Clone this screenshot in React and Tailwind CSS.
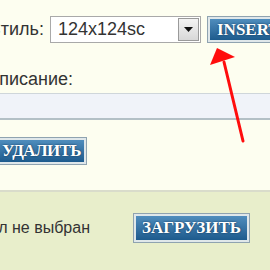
export default function App() {
  const btnOuter = "flex border border-[#8fa3b0] bg-[#dfe7ea] p-[2px] shrink-0";
  const btnInner =
    "flex items-center h-full bg-gradient-to-b from-[#4f8dbd] to-[#1d5b8d] text-white font-bold font-['Liberation_Serif',serif] text-[17px] whitespace-nowrap [text-shadow:0_0_2px_#0b3050]";
  return (
    <div className="relative w-[270px] h-[270px] overflow-hidden bg-[#fdfef0] font-['Liberation_Sans',Arial,sans-serif] text-[#333]">
      <div className="h-[190px] pt-[16px]">
        <div className="flex items-center h-[27px]">
          <div className="w-[44px] shrink-0 flex justify-end overflow-hidden whitespace-nowrap text-[18px]">Стиль:</div>
          <div className="ml-[6px] w-[151px] h-[27px] flex items-center border border-[#a9a9a9] bg-white shrink-0">
            <span className="pl-[7px] flex-1 text-[18px] text-[#333]">124x124sc</span>
            <div className="w-[21px] h-[23px] mr-[1px] flex items-center justify-center border border-[#9a9a9a] bg-gradient-to-b from-[#f4f4f4] to-[#d8d8d8]">
              <svg width="9" height="5" viewBox="0 0 9 5"><polygon points="0,0 9,0 4.5,5" fill="#111" /></svg>
            </div>
          </div>
          <div className={btnOuter + " ml-[6px] h-[27px]"}>
            <span className={btnInner + " pl-[7px] pr-[4px]"}>INSERT</span>
          </div>
        </div>
        <div className="flex mt-[26px] h-[20px] items-center">
          <div className="w-[73px] shrink-0 flex justify-end overflow-hidden whitespace-nowrap text-[18px]">Описание:</div>
        </div>
        <div className="mt-[4px] -mx-[4px] h-[27px] border border-[#cfd6da] border-b-2 border-b-[#b3c0c6] bg-[#f0f3f9]"></div>
        <div className="flex mt-[17px] h-[28px]">
          <div className="w-[87px] shrink-0 flex justify-end overflow-hidden">
            <div className={btnOuter + " h-[28px]"}>
              <span className={btnInner + " pl-[6px] pr-[3px] tracking-[-0.6px]"}>УДАЛИТЬ</span>
            </div>
          </div>
        </div>
      </div>
      <div className="h-[80px] border-t-2 border-[#d9dccb] bg-[#e8eecb]">
        <div className="flex items-center mt-[21px] h-[30px]">
          <div className="w-[90px] shrink-0 flex justify-end overflow-hidden whitespace-nowrap text-[16px]">Файл не выбран</div>
          <div className={btnOuter + " ml-[43px] h-[30px]"}>
            <span className={btnInner + " px-[6px]"}>ЗАГРУЗИТЬ</span>
          </div>
        </div>
      </div>
      <svg className="absolute left-0 top-0 pointer-events-none" width="270" height="270" viewBox="0 0 270 270">
        <line x1="243" y1="141" x2="224" y2="62" stroke="#ff0d0d" strokeWidth="3" strokeLinecap="round" />
        <polygon points="217,48 235,57 210,65" fill="#ff0d0d" />
      </svg>
    </div>
  );
}
